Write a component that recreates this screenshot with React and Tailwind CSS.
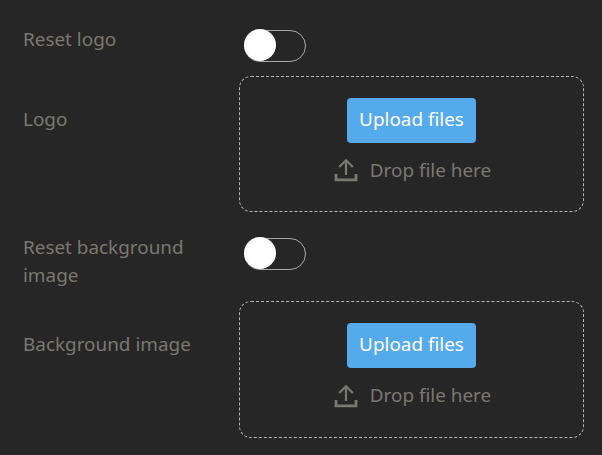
const UploadIcon = () => (
  <svg width="24" height="24" viewBox="0 0 24 24" fill="none" stroke="#7a7872" strokeWidth="2.2">
    <path d="M12 17V2.5" />
    <path d="M5.2 9L12 2.2 18.8 9" />
    <path d="M2 16v5.8h20V16" strokeWidth="2.8" />
  </svg>
);

const Toggle = () => (
  <div className="w-[62px] h-8 mt-[14px] mb-[2px] ml-[5px] rounded-full border border-[#a8a8a8] relative">
    <div className="absolute -left-px -top-[2px] w-8 h-8 rounded-full bg-white" />
  </div>
);

const Dropzone = () => (
  <div className="h-[136.4px] border border-dashed border-[#b5b5b5] rounded-xl flex flex-col items-center pt-[21px]">
    <button className="h-[45px] px-3 pb-[3px] rounded bg-[#55aaeb] text-white text-[18.9px]">Upload files</button>
    <div className="flex items-center gap-3 ml-[2px] mt-[13px] text-[18.9px] text-[#7a7872]">
      <UploadIcon />
      <span>Drop file here</span>
    </div>
  </div>
);

const Row = ({ label, children }) => (
  <div className="flex">
    <div className="w-[216px] shrink-0 pt-[9px] pr-8 text-[18.9px] leading-7 text-[#7a7872]">{label}</div>
    <div className="w-[345px]">{children}</div>
  </div>
);

export default function App() {
  return (
    <div className="w-[602px] h-[455px] overflow-hidden bg-[#262626] pl-[23px] pt-4 flex flex-col gap-3 font-['Noto_Sans',sans-serif]">
      <Row label="Reset logo">
        <Toggle />
      </Row>
      <Row label={<span className="block pt-5">Logo</span>}>
        <Dropzone />
      </Row>
      <Row label="Reset background image">
        <Toggle />
      </Row>
      <Row label={<span className="block pt-5">Background image</span>}>
        <Dropzone />
      </Row>
    </div>
  );
}
